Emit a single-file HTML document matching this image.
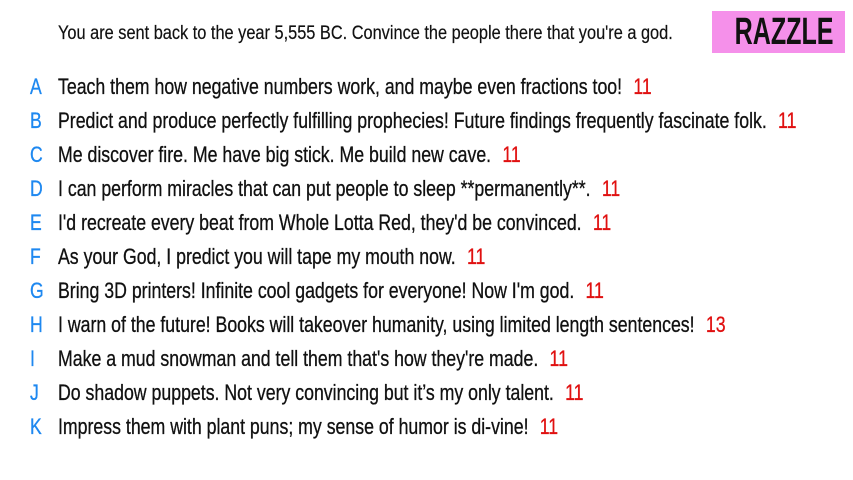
<!DOCTYPE html>
<html><head><meta charset="utf-8"><style>
body{margin:0;width:853px;height:480px;background:#fff;position:relative;overflow:hidden;font-family:"Liberation Sans",sans-serif;color:#111}
.h{position:absolute;left:58px;top:22px;font-size:19px;line-height:24px;white-space:nowrap;transform:scaleX(0.86);transform-origin:left center;-webkit-text-stroke:0.2px #111}
.logo{position:absolute;left:712px;top:11px;width:133px;height:42px;background:#f590ea}
.logo span{position:absolute;left:0;width:133px;text-align:center;font-size:38px;font-weight:bold;line-height:43px;color:#111;transform:scaleX(0.66);transform-origin:center}
.r{position:absolute;left:0;height:30px;line-height:30px;font-size:22px;white-space:nowrap}
.l{position:absolute;left:30px;color:#1e88f0;transform:scaleX(0.8);transform-origin:left center;-webkit-text-stroke:0.3px #1e88f0}
.t{position:absolute;left:58px;transform:scaleX(0.805);transform-origin:left center;-webkit-text-stroke:0.3px #111}
.n{color:#e01010;margin-left:14px;-webkit-text-stroke:0.3px #e01010}
</style></head><body>
<div class="h">You are sent back to the year 5,555 BC. Convince the people there that you're a god.</div>
<div class="logo"><span>RAZZLE</span></div>
<div class="r" style="top:72px"><span class="l">A</span><span class="t">Teach them how negative numbers work, and maybe even fractions too!<span class="n">11</span></span></div>
<div class="r" style="top:106px"><span class="l">B</span><span class="t">Predict and produce perfectly fulfilling prophecies! Future findings frequently fascinate folk.<span class="n">11</span></span></div>
<div class="r" style="top:140px"><span class="l">C</span><span class="t">Me discover fire. Me have big stick. Me build new cave.<span class="n">11</span></span></div>
<div class="r" style="top:174px"><span class="l">D</span><span class="t">I can perform miracles that can put people to sleep **permanently**.<span class="n">11</span></span></div>
<div class="r" style="top:208px"><span class="l">E</span><span class="t">I'd recreate every beat from Whole Lotta Red, they'd be convinced.<span class="n">11</span></span></div>
<div class="r" style="top:242px"><span class="l">F</span><span class="t">As your God, I predict you will tape my mouth now.<span class="n">11</span></span></div>
<div class="r" style="top:276px"><span class="l">G</span><span class="t">Bring 3D printers! Infinite cool gadgets for everyone! Now I'm god.<span class="n">11</span></span></div>
<div class="r" style="top:310px"><span class="l">H</span><span class="t">I warn of the future! Books will takeover humanity, using limited length sentences!<span class="n">13</span></span></div>
<div class="r" style="top:344px"><span class="l">I</span><span class="t">Make a mud snowman and tell them that's how they're made.<span class="n">11</span></span></div>
<div class="r" style="top:378px"><span class="l">J</span><span class="t">Do shadow puppets. Not very convincing but it’s my only talent.<span class="n">11</span></span></div>
<div class="r" style="top:412px"><span class="l">K</span><span class="t">Impress them with plant puns; my sense of humor is di-vine!<span class="n">11</span></span></div>
</body></html>
